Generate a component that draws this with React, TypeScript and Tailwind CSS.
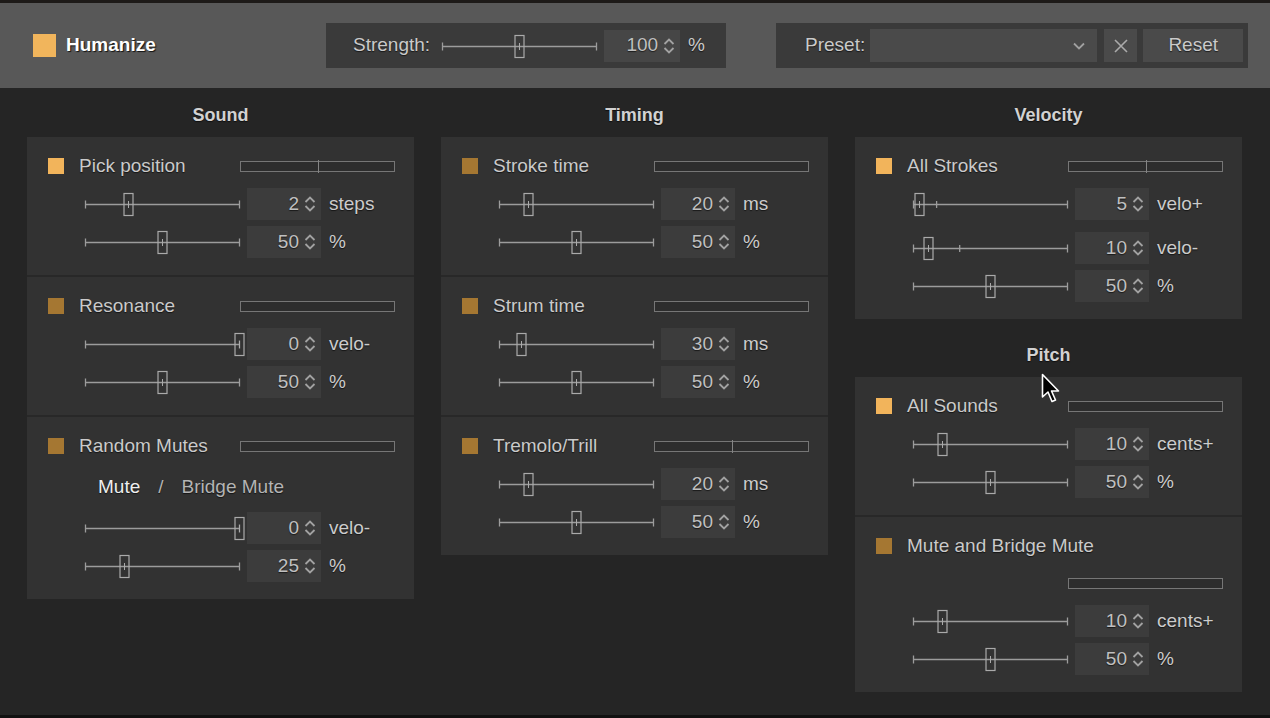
import React from "react";

type Row = {
  frac: number;
  value: string;
  unit: string;
  ticks?: number[];
  gapBefore?: boolean;
};

function Spinner() {
  return (
    <svg width="12" height="20" viewBox="0 0 12 20" fill="none" stroke="#a2a2a2" strokeWidth="1.8">
      <path d="M1.5 8 6 3.5 10.5 8M1.5 12 6 16.5 10.5 12" />
    </svg>
  );
}

function Slider({ frac, ticks = [] }: { frac: number; ticks?: number[] }) {
  const cx = Math.round(frac * 154) + 0.5;
  return (
    <svg width="155" height="26" viewBox="0 0 155 26" className="overflow-visible">
      <line x1="0.5" y1="13.5" x2="154.5" y2="13.5" stroke="#9c9c9c" strokeWidth="1.5" />
      <line x1="0.5" y1="9.5" x2="0.5" y2="17.5" stroke="#9c9c9c" strokeWidth="1.3" />
      <line x1="154.5" y1="9.5" x2="154.5" y2="17.5" stroke="#9c9c9c" strokeWidth="1.3" />
      {ticks.map((t) => (
        <line key={t} x1={t * 154 + 0.5} y1="10" x2={t * 154 + 0.5} y2="17" stroke="#9c9c9c" strokeWidth="1.3" />
      ))}
      <rect x={cx - 4.5} y="2.5" width="9" height="22" fill="none" stroke="#aaaaaa" strokeWidth="1.2" />
      <line x1={cx} y1="10" x2={cx} y2="17" stroke="#aaaaaa" />
    </svg>
  );
}

function NumBox({ value, dark }: { value: string; dark?: boolean }) {
  return (
    <div
      className={
        dark
          ? "flex h-[32px] w-[76px] items-center justify-end bg-[#464646] pr-[5px]"
          : "flex h-[32px] w-[74px] items-center justify-end bg-[#3c3c3c] pr-[5px]"
      }
    >
      <span className="text-[#c0c0c0]">{value}</span>
      <span className="ml-[5px] flex">
        <Spinner />
      </span>
    </div>
  );
}

function SliderRow({ row }: { row: Row }) {
  return (
    <div className={row.gapBefore ? "mt-[6px] flex h-[38px] items-center" : "flex h-[38px] items-center"}>
      <div className="ml-[58px] flex w-[155px]">
        <Slider frac={row.frac} ticks={row.ticks} />
      </div>
      <div className="ml-[7px]">
        <NumBox value={row.value} />
      </div>
      <span className="ml-[8px] text-[#cccccc]">{row.unit}</span>
    </div>
  );
}

function Meter({ tick }: { tick?: boolean }) {
  return (
    <div className="relative h-[11px] w-[155px] border border-[#767676] bg-[#2d2d2d]">
      {tick ? <div className="absolute top-[-2px] left-[77px] h-[13px] w-px bg-[#858585]" /> : null}
    </div>
  );
}

function Section({
  label,
  on,
  tick,
  meterBelow,
  rows,
  children,
}: {
  label: string;
  on?: boolean;
  tick?: boolean;
  meterBelow?: boolean;
  rows: Row[];
  children?: React.ReactNode;
}) {
  return (
    <div className="pt-[10px] pb-[14px]">
      <div className="flex h-[38px] items-center">
        <div className={on ? "ml-[21px] h-4 w-4 bg-[#f2b45b]" : "ml-[21px] h-4 w-4 bg-[#a57732]"} />
        <span className="ml-[15px] flex-1 text-[#cacaca]">{label}</span>
        {meterBelow ? null : (
          <div className="mr-[19px]">
            <Meter tick={tick} />
          </div>
        )}
      </div>
      {meterBelow ? (
        <div className="flex h-[37px] items-center justify-end pr-[19px]">
          <Meter />
        </div>
      ) : null}
      {children}
      {rows.map((r, i) => (
        <SliderRow key={i} row={r} />
      ))}
    </div>
  );
}

function Divider() {
  return <div className="h-[2px] bg-[#282828]" />;
}

function ColumnTitle({ children, tall }: { children: React.ReactNode; tall?: boolean }) {
  return (
    <div
      className={
        tall
          ? "flex h-[58px] items-center justify-center pt-[14px] text-[18px] font-bold text-[#d2d2d2]"
          : "flex h-[49px] items-center justify-center pt-[5px] text-[18px] font-bold text-[#d2d2d2]"
      }
    >
      {children}
    </div>
  );
}

function Panel({ children }: { children: React.ReactNode }) {
  return <div className="bg-[#323232]">{children}</div>;
}

export default function App() {
  return (
    <div className="relative flex h-[718px] w-[1270px] flex-col overflow-hidden bg-[#252525] font-['Liberation_Sans',Arial,sans-serif] text-[19px] [text-shadow:0_1px_1px_rgba(0,0,0,0.6)]">
      <div className="h-[3px] bg-[#1d1a18]" />

      {/* header */}
      <header className="flex h-[85px] items-center bg-[#585858]">
        <div className="flex w-[326px] items-center">
          <div className="ml-[33px] h-[23px] w-[23px] bg-[#f1b55c]" />
          <span className="ml-[10px] font-bold text-white [text-shadow:1px_1px_1px_rgba(0,0,0,0.8)]">Humanize</span>
        </div>
        <div className="flex h-[45px] w-[400px] items-center bg-[#3a3a3a] pl-[27px]">
          <span className="text-[#cacaca]">Strength:</span>
          <div className="ml-[12px] flex w-[155px]">
            <Slider frac={0.5} />
          </div>
          <div className="ml-[7px]">
            <NumBox value="100" dark />
          </div>
          <span className="ml-[8px] text-[#cacaca]">%</span>
        </div>
        <div className="ml-[50px] flex h-[45px] w-[472px] items-center bg-[#3a3a3a] pl-[29px]">
          <span className="text-[#cacaca]">Preset:</span>
          <div className="ml-[5px] flex h-[33px] w-[227px] items-center justify-end bg-[#4a4a4a] pr-[11px]">
            <svg width="14" height="10" viewBox="0 0 14 10" fill="none" stroke="#a0a0a0" strokeWidth="1.8">
              <path d="M2 2.5 7 7.5 12 2.5" />
            </svg>
          </div>
          <div className="ml-[7px] flex h-[33px] w-[33px] items-center justify-center bg-[#4a4a4a]">
            <svg width="16" height="16" viewBox="0 0 16 16" fill="none" stroke="#aaaaaa" strokeWidth="1.6">
              <path d="M2 2 14 14M14 2 2 14" />
            </svg>
          </div>
          <div className="ml-[6px] flex h-[33px] w-[100px] items-center justify-center bg-[#4a4a4a] text-[#cacaca]">
            Reset
          </div>
        </div>
      </header>

      {/* body */}
      <main className="flex flex-1 gap-[27px] px-[27px]">
        <div className="w-[387px]">
          <ColumnTitle>Sound</ColumnTitle>
          <Panel>
            <Section
              label="Pick position"
              on
              tick
              rows={[
                { frac: 0.28, value: "2", unit: "steps" },
                { frac: 0.5, value: "50", unit: "%" },
              ]}
            />
            <Divider />
            <Section
              label="Resonance"
              rows={[
                { frac: 1, value: "0", unit: "velo-" },
                { frac: 0.5, value: "50", unit: "%" },
              ]}
            />
            <Divider />
            <Section
              label="Random Mutes"
              rows={[
                { frac: 1, value: "0", unit: "velo-" },
                { frac: 0.25, value: "25", unit: "%" },
              ]}
            >
              <div className="flex h-[44px] items-center pl-[71px]">
                <span className="text-[#eeeeee]">Mute</span>
                <span className="ml-[18px] text-[#b4b4b4]">/</span>
                <span className="ml-[18px] text-[#b4b4b4]">Bridge Mute</span>
              </div>
            </Section>
          </Panel>
        </div>

        <div className="w-[387px]">
          <ColumnTitle>Timing</ColumnTitle>
          <Panel>
            <Section
              label="Stroke time"
              rows={[
                { frac: 0.19, value: "20", unit: "ms" },
                { frac: 0.5, value: "50", unit: "%" },
              ]}
            />
            <Divider />
            <Section
              label="Strum time"
              rows={[
                { frac: 0.14, value: "30", unit: "ms" },
                { frac: 0.5, value: "50", unit: "%" },
              ]}
            />
            <Divider />
            <Section
              label="Tremolo/Trill"
              tick
              rows={[
                { frac: 0.19, value: "20", unit: "ms" },
                { frac: 0.5, value: "50", unit: "%" },
              ]}
            />
          </Panel>
        </div>

        <div className="w-[387px]">
          <ColumnTitle>Velocity</ColumnTitle>
          <Panel>
            <Section
              label="All Strokes"
              on
              tick
              rows={[
                { frac: 0.04, value: "5", unit: "velo+", ticks: [0.15] },
                { frac: 0.1, value: "10", unit: "velo-", ticks: [0.3], gapBefore: true },
                { frac: 0.5, value: "50", unit: "%" },
              ]}
            />
          </Panel>
          <ColumnTitle tall>Pitch</ColumnTitle>
          <Panel>
            <Section
              label="All Sounds"
              on
              rows={[
                { frac: 0.19, value: "10", unit: "cents+" },
                { frac: 0.5, value: "50", unit: "%" },
              ]}
            />
            <Divider />
            <Section
              label="Mute and Bridge Mute"
              meterBelow
              rows={[
                { frac: 0.19, value: "10", unit: "cents+" },
                { frac: 0.5, value: "50", unit: "%" },
              ]}
            />
          </Panel>
        </div>
      </main>
      <div className="h-[3px] bg-[#111111]" />

      {/* mouse pointer */}
      <svg
        className="absolute top-[373px] left-[1041px]"
        width="22"
        height="32"
        viewBox="0 0 22 32"
      >
        <path
          d="M1.5 1.5 1.5 24 7 19 11 28.5 14.5 27 10.5 18 17.5 18Z"
          fill="#000"
          stroke="#fff"
          strokeWidth="1.6"
          strokeLinejoin="round"
        />
      </svg>
    </div>
  );
}
